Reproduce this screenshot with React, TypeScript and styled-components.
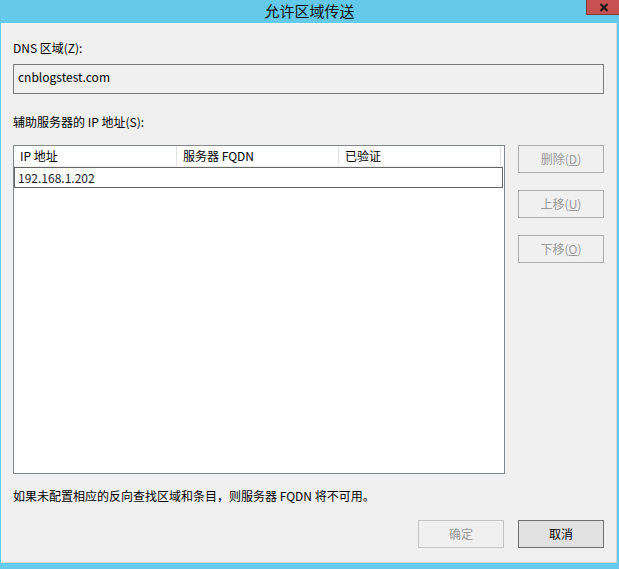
import React from "react";
import styled, { createGlobalStyle } from "styled-components";

const Global = createGlobalStyle`
  html, body { margin: 0; padding: 0; background: #64c9ea; }
  body { font-family: "Noto Sans CJK SC", "Noto Sans", sans-serif; font-size: 12px; color: #000; }
  * { box-sizing: border-box; }
`;

const Frame = styled.div`
  width: 619px;
  height: 569px;
  background: #64c9ea;
  display: flex;
  flex-direction: column;
  position: relative;
`;

const TitleBar = styled.div`
  height: 23px;
  display: flex;
  align-items: center;
  justify-content: center;
  font-size: 15px;
  line-height: 20px;
  color: #111;
  padding-bottom: 2px;
`;

const CloseButton = styled.div`
  position: absolute;
  top: 0;
  right: -2px;
  width: 35px;
  height: 15px;
  background: #c75050;
  border: 1px solid #7d3a3a;
  border-top: none;
  display: flex;
  align-items: center;
  justify-content: center;
`;

const Client = styled.div`
  margin: 0 2px 6px 1px;
  height: 540px;
  background: #f0f0f0;
  border-left: 1px solid #f7f7f7;
  border-top: 1px solid #f7f7f7;
  border-right: 1px solid #d6d6d6;
  border-bottom: 1px solid #d6d6d6;
  padding: 16px 12px 0 11px;
  display: flex;
  flex-direction: column;
`;

const Label = styled.div<{ $mt?: number }>`
  line-height: 16px;
  height: 16px;
  margin-top: ${(p) => p.$mt ?? 0}px;
  white-space: nowrap;
`;

const ReadOnlyBox = styled.div`
  margin-top: 8px;
  height: 30px;
  border: 1px solid #7a7a7a;
  background: #f0f0f0;
  padding: 4px 4px 0 4px;
  line-height: 16px;
`;

const MainRow = styled.div`
  margin-top: 15px;
  display: flex;
  gap: 13px;
`;

const ListBox = styled.div`
  width: 492px;
  height: 329px;
  border: 1px solid #828790;
  background: #fff;
  display: flex;
  flex-direction: column;
`;

const HeaderRow = styled.div`
  display: flex;
  height: 21px;
  border-bottom: 1px solid #f0f0f0;
`;

const HeaderCell = styled.div<{ $w: number }>`
  width: ${(p) => p.$w}px;
  border-right: 1px solid #e2e2e2;
  padding-left: 6px;
  line-height: 20px;
  background: #fff;
  white-space: nowrap;
`;

const DataRow = styled.div`
  margin-right: 1px;
  height: 21px;
  border: 1px solid #646464;
  padding-left: 3px;
  line-height: 19px;
  color: #1a1a2a;
`;

const SideButtons = styled.div`
  display: flex;
  flex-direction: column;
  gap: 17px;
`;

const Button = styled.div<{ $disabled?: boolean; $primary?: boolean; $faint?: boolean }>`
  width: 86px;
  height: 28px;
  display: flex;
  align-items: center;
  justify-content: center;
  line-height: 16px;
  background: ${(p) => (p.$disabled ? "#f0f0f0" : "#e1e1e1")};
  border: 1px solid ${(p) => (p.$disabled ? (p.$faint ? "#c4c4c4" : "#adadad") : "#707070")};
  color: ${(p) => (p.$disabled ? "#9a9a9a" : "#000")};
  white-space: nowrap;
`;

const Note = styled.div`
  margin-top: 14px;
  line-height: 16px;
  white-space: nowrap;
`;

const Footer = styled.div`
  margin-top: 16px;
  display: flex;
  justify-content: flex-end;
  gap: 14px;
`;

const U = styled.span`
  text-decoration: underline;
  text-underline-offset: 1px;
`;

export default function App() {
  return (
    <>
      <Global />
      <Frame>
        <TitleBar>允许区域传送</TitleBar>
        <CloseButton>
          <svg width="10" height="9" viewBox="0 0 10 9">
            <path d="M1.5 1 L8.5 8 M8.5 1 L1.5 8" stroke="#1a1a1a" strokeWidth="2.2" />
          </svg>
        </CloseButton>
        <Client>
          <Label>DNS 区域(Z):</Label>
          <ReadOnlyBox>cnblogstest.com</ReadOnlyBox>
          <Label $mt={20}>辅助服务器的 IP 地址(S):</Label>
          <MainRow>
            <ListBox>
              <HeaderRow>
                <HeaderCell $w={163}>IP 地址</HeaderCell>
                <HeaderCell $w={162}>服务器 FQDN</HeaderCell>
                <HeaderCell $w={162}>已验证</HeaderCell>
              </HeaderRow>
              <DataRow>192.168.1.202</DataRow>
            </ListBox>
            <SideButtons>
              <Button $disabled>删除(<U>D</U>)</Button>
              <Button $disabled>上移(<U>U</U>)</Button>
              <Button $disabled>下移(<U>O</U>)</Button>
            </SideButtons>
          </MainRow>
          <Note>如果未配置相应的反向查找区域和条目，则服务器 FQDN 将不可用。</Note>
          <Footer>
            <Button $disabled $faint>确定</Button>
            <Button>取消</Button>
          </Footer>
        </Client>
      </Frame>
    </>
  );
}
